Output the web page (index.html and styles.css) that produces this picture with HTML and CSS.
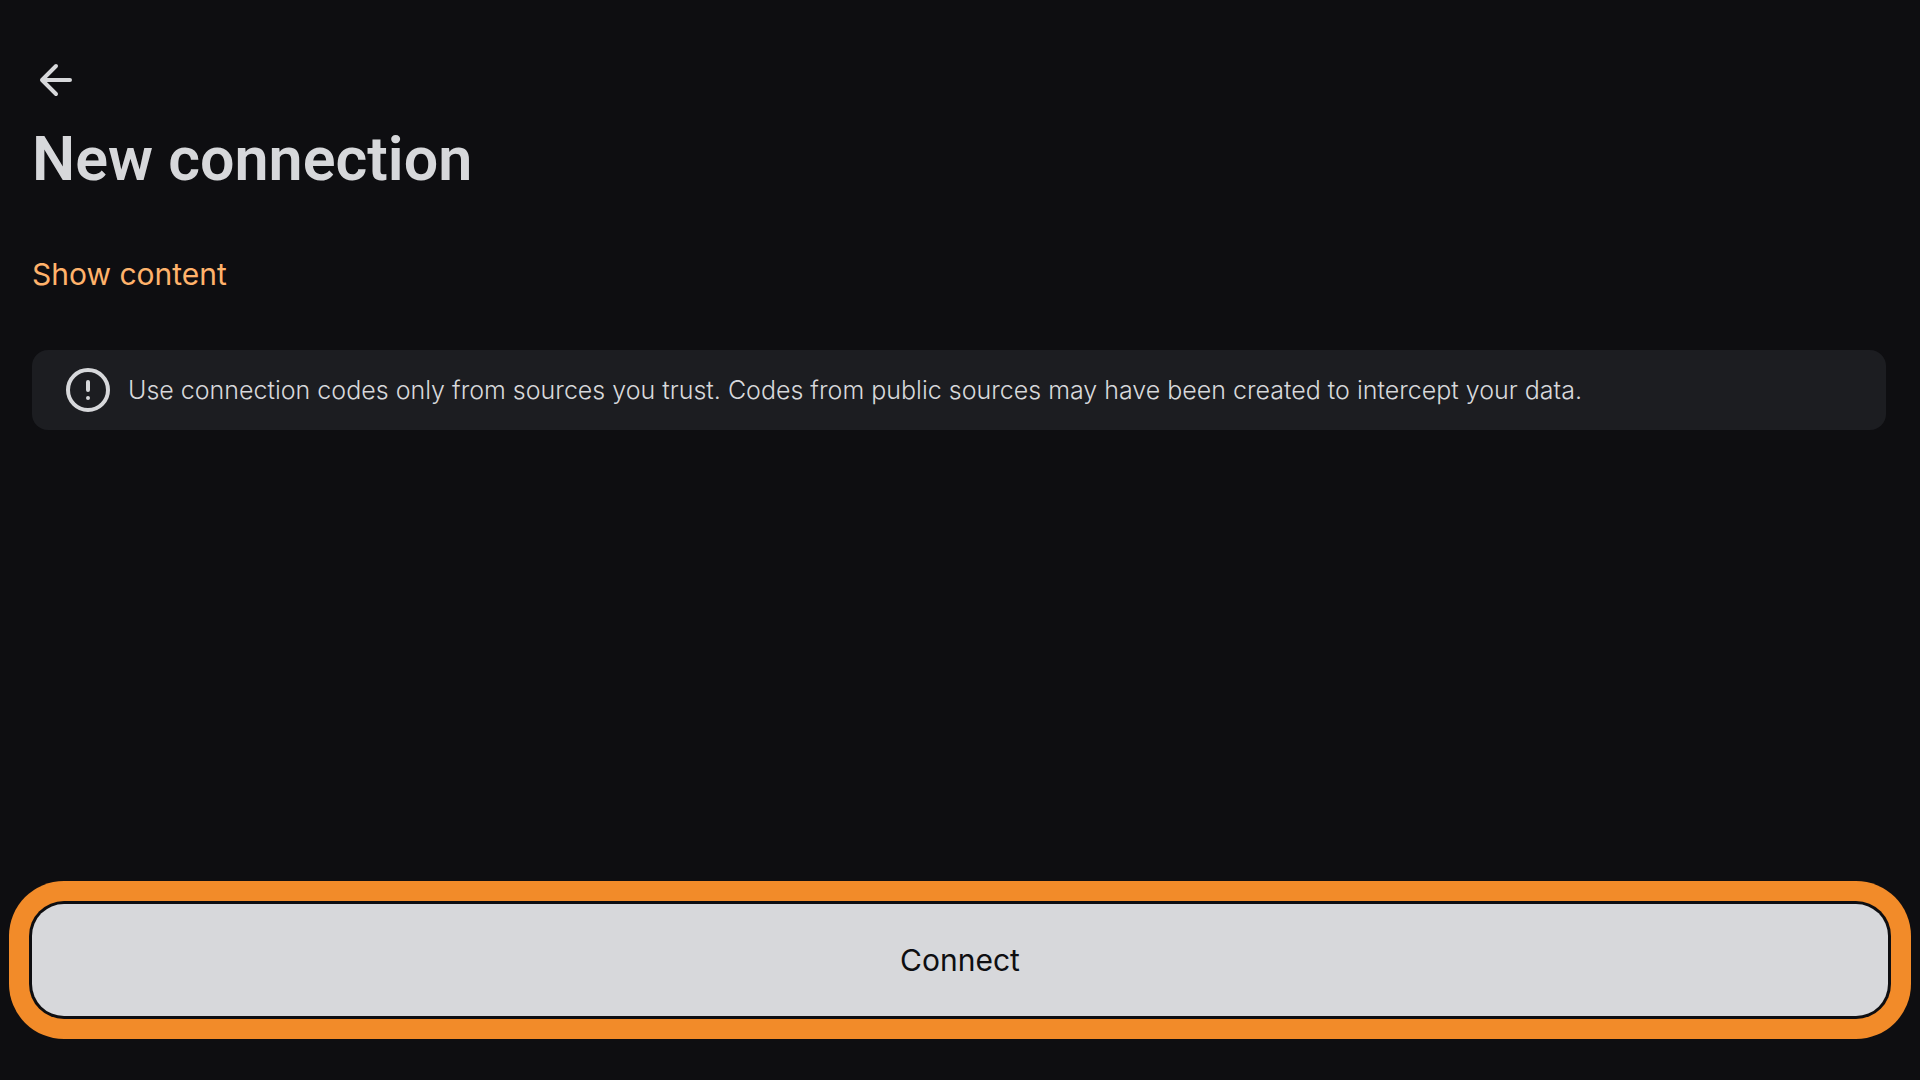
FILE: index.html
```html
<!DOCTYPE html>
<html lang="en">
<head>
    <meta charset="UTF-8">
    <meta name="viewport" content="width=device-width, initial-scale=1.0">
    <title>New connection</title>
    <link rel="stylesheet" href="styles.css">
</head>
<body>
<div class="page">
    <header class="header">
        <button type="button" class="back-button" aria-label="Back">
            <svg width="48" height="48" viewBox="0 0 48 48" fill="none" stroke="currentColor" stroke-width="4" stroke-linecap="round" stroke-linejoin="round">
                <path d="M38 24H10M24 10L10 24L24 38"/>
            </svg>
        </button>
        <h1>New connection</h1>
    </header>

    <main class="content">
        <button type="button" class="link-button">Show content</button>

        <!-- Warning -->
        <div class="notice">
            <svg width="48" height="48" viewBox="0 0 48 48" fill="none" stroke="currentColor" stroke-width="4" stroke-linecap="round">
                <circle cx="24" cy="24" r="20"/>
                <path d="M24 16V24M24 32V32.01"/>
            </svg>
            <p>Use connection codes only from sources you trust. Codes from public sources may have been created to intercept your data.</p>
        </div>
    </main>

    <footer class="footer">
        <button type="button" class="connect-button">Connect</button>
    </footer>
</div>
</body>
</html>
```
FILE: styles.css
```css
* {
    box-sizing: border-box;
}
body {
    margin: 0;
    font-family: Inter, "Liberation Sans", sans-serif;
    background-color: #0e0e11;
    color: #d7d8db;
}
button {
    padding: 0;
    border: none;
    background: none;
    color: inherit;
    font-family: inherit;
    cursor: pointer;
}
svg {
    display: block;
    flex-shrink: 0;
}
.page {
    display: flex;
    flex-direction: column;
    min-height: 100vh;
    padding: 56px 32px 64px;
}
.back-button {
    display: block;
}
h1 {
    margin: 16px 0 0;
    font-family: Roboto, "Liberation Sans", sans-serif;
    font-size: 61px;
    line-height: 78px;
    font-weight: 600;
}
.content {
    flex: 1;
    padding-top: 56px;
}
.link-button {
    display: block;
    color: #ffb26b;
    font-size: 30px;
    line-height: 40px;
}
.notice {
    display: flex;
    align-items: center;
    gap: 16px;
    margin: 56px 2px 0 0;
    padding: 16px 32px;
    border-radius: 16px;
    background-color: #1c1d21;
}
.notice p {
    margin: 0;
    font-size: 25px;
    line-height: 32px;
    font-weight: 300;
}
.connect-button {
    display: block;
    width: 100%;
    padding: 36px;
    border-radius: 32px;
    background-color: #d7d8db;
    box-shadow: 0 0 0 3px #0e0e11, 0 0 0 23px #f28b29;
    color: #0e0e11;
    font-size: 30px;
    line-height: 40px;
}
```
